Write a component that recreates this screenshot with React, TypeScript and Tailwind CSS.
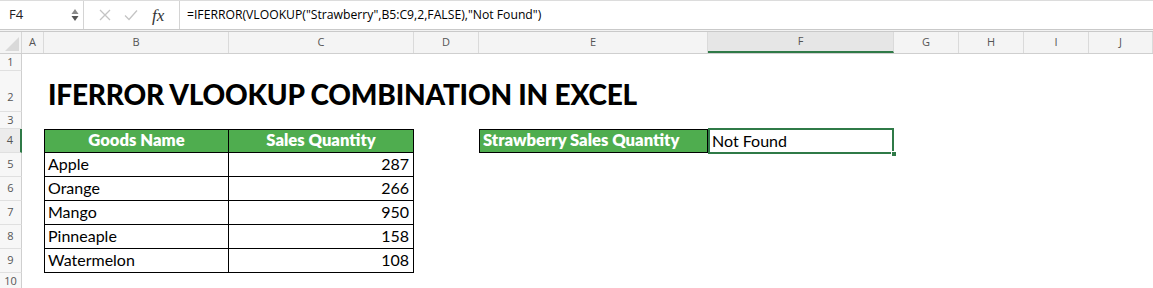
import React from "react";

const COLS: { label: string; w: number }[] = [
  { label: "A", w: 22 },
  { label: "B", w: 185 },
  { label: "C", w: 185 },
  { label: "D", w: 65 },
  { label: "E", w: 229 },
  { label: "F", w: 186 },
  { label: "G", w: 65 },
  { label: "H", w: 65 },
  { label: "I", w: 65 },
  { label: "J", w: 64 },
];

const ROWH = [17, 41, 17, 24, 24, 24, 24, 24, 24, 17];

const data: [string, string][] = [
  ["Apple", "287"],
  ["Orange", "266"],
  ["Mango", "950"],
  ["Pinneaple", "158"],
  ["Watermelon", "108"],
];

const cellFont = { fontFamily: "Lato, 'Open Sans', sans-serif" };

function Cell({ w, children, className = "", style }: { w: number; children?: React.ReactNode; className?: string; style?: React.CSSProperties }) {
  return (
    <div className={`shrink-0 h-full box-border ${className}`} style={{ width: w, ...style }}>
      {children}
    </div>
  );
}

function Row({ r }: { r: number }) {
  const h = ROWH[r - 1];
  const selected = r === 4;
  const cells: React.ReactNode[] = [];
  const tableRow = r >= 4 && r <= 9;
  COLS.forEach((c, i) => {
    let content: React.ReactNode = null;
    let cls = "";
    if (r === 2 && c.label === "B") {
      content = (
        <div className="h-full flex items-end pb-[4px] pl-[4px] whitespace-nowrap overflow-visible">
          <span className="text-[28px] font-black text-black tracking-[-0.2px] leading-none" style={cellFont}>
            IFERROR VLOOKUP COMBINATION IN EXCEL
          </span>
        </div>
      );
      cls = "overflow-visible";
    }
    if (tableRow && (c.label === "B" || c.label === "C")) {
      cls += " border-black border-r border-b";
      if (c.label === "B") cls += " border-l";
      if (r === 4) cls += " border-t";
      if (r === 4) {
        cls += " bg-[#4fad4f]";
        content = (
          <div className="h-full flex items-center justify-center pb-[1px] text-white font-extrabold text-[16.6px]" style={cellFont}>
            {c.label === "B" ? "Goods Name" : "Sales Quantity"}
          </div>
        );
      } else {
        const d = data[r - 5];
        content = (
          <div
            className={`h-full flex items-center pb-[1px] text-black text-[16px] ${c.label === "B" ? "justify-start pl-[3px]" : "justify-end pr-[4px]"}`}
            style={cellFont}
          >
            {c.label === "B" ? d[0] : d[1]}
          </div>
        );
      }
    }
    if (r === 4 && c.label === "E") {
      cls += " bg-[#4fad4f] border border-black";
      content = (
        <div className="h-full flex items-center pb-[1px] pl-[3px] text-white font-extrabold text-[16.6px] whitespace-nowrap" style={cellFont}>
          Strawberry Sales Quantity
        </div>
      );
    }
    if (r === 4 && c.label === "F") {
      cls += " relative";
      content = (
        <>
          <div className="h-full flex items-center pb-[1px] pl-[4px] text-black text-[16px]" style={cellFont}>
            Not Found
          </div>
          <div className="absolute left-[0px] top-[-1px] right-[0px] bottom-[-1px] border-2 border-[#2f7a47]" />
          <div className="absolute right-[-3px] bottom-[-4px] w-[6px] h-[6px] bg-[#2f7a47] border border-white" />
        </>
      );
    }
    cells.push(
      <Cell key={i} w={c.w} className={cls}>
        {content}
      </Cell>
    );
  });
  return (
    <div className="flex shrink-0" style={{ height: h }}>
      <div
        className={`w-[22px] shrink-0 h-full box-border border-b border-[#e0e0e0] flex items-center justify-center text-[11px] text-[#555] ${
          selected ? "bg-[#ececec] border-r-2 border-r-[#2f7a47]" : "bg-[#f7f7f7] border-r border-r-[#cfcfcf]"
        }`}
        style={{ fontFamily: "'Open Sans', sans-serif", paddingTop: r === 2 ? 12 : 0 }}
      >
        {r}
      </div>
      {cells}
    </div>
  );
}

export default function App() {
  return (
    <div className="w-[1153px] h-[288px] overflow-hidden bg-white select-none">
      {/* formula bar */}
      <div className="h-[29px] flex items-stretch bg-white border-t border-[#dcdcdc]" style={{ fontFamily: "'Open Sans', sans-serif" }}>
        <div className="w-[84px] shrink-0 flex items-center justify-between pl-[9px] pr-[4px] border-r border-[#d4d4d4]">
          <span className="text-[13px] text-[#222]">F4</span>
          <svg width="8" height="16" viewBox="0 0 8 16">
            <path d="M4 2 L7.5 7 L0.5 7 Z" fill="#8a8a8a" />
            <path d="M4 14 L7.5 9 L0.5 9 Z" fill="#555" />
          </svg>
        </div>
        <div className="w-[96px] shrink-0 flex items-center border-r border-[#d4d4d4]">
          <svg width="12" height="12" viewBox="0 0 12 12" className="ml-[15px]">
            <path d="M1 1 L11 11 M11 1 L1 11" stroke="#c4c4c4" strokeWidth="1.3" />
          </svg>
          <svg width="14" height="12" viewBox="0 0 14 12" className="ml-[13px]">
            <path d="M1 6.5 L5 10.5 L13 1.5" stroke="#c4c4c4" strokeWidth="1.3" fill="none" />
          </svg>
          <span className="ml-[14px] text-[17px] italic text-[#333] leading-none" style={{ fontFamily: "'Liberation Serif', serif" }}>
            fx
          </span>
        </div>
        <div className="flex items-center pl-[7px] text-[12.2px] text-black whitespace-nowrap">
          =IFERROR(VLOOKUP("Strawberry",B5:C9,2,FALSE),"Not Found")
        </div>
      </div>
      <div className="h-[3px] bg-[#f2f2f2] border-t border-b border-[#c9c9c9] box-border" />
      {/* column header */}
      <div className="h-[21px] flex bg-[#f4f4f4] border-b border-[#cfcfcf] box-content" style={{ fontFamily: "'Open Sans', sans-serif" }}>
        <div className="w-[22px] shrink-0 h-full border-r border-[#d6d6d6] relative">
          <svg width="14" height="14" viewBox="0 0 14 14" className="absolute right-[2px] bottom-[2px]">
            <path d="M14 0 L14 14 L0 14 Z" fill="#d9d9d9" />
          </svg>
        </div>
        {COLS.map((c) => (
          <div
            key={c.label}
            className={`shrink-0 h-full box-border flex items-center justify-center text-[11px] text-[#555] border-r border-[#dadada] ${
              c.label === "F" ? "bg-[#e6e6e6] border-b-2 border-b-[#2f7a47]" : ""
            }`}
            style={{ width: c.w }}
          >
            {c.label}
          </div>
        ))}
      </div>
      {ROWH.map((_, i) => (
        <Row key={i} r={i + 1} />
      ))}
    </div>
  );
}
